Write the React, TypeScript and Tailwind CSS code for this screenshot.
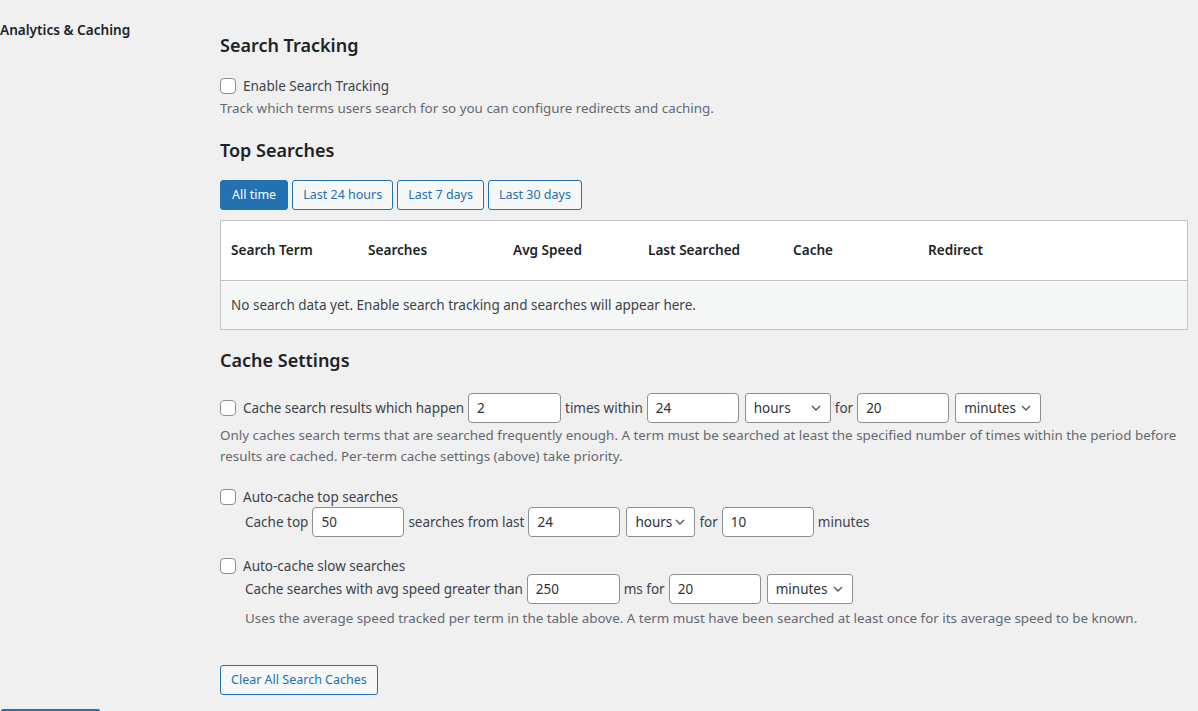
import React from "react";

const font = { fontFamily: '"Noto Sans", "Open Sans", sans-serif' };

function Checkbox() {
  return (
    <span className="inline-block w-[16px] h-[16px] shrink-0 rounded-[4px] border border-[#8c8f94] bg-white" />
  );
}

function Input({ value, w = "w-[92px]" }: { value: string; w?: string }) {
  return (
    <span
      className={`${w} h-[30px] shrink-0 flex items-center px-[8px] rounded-[4px] border border-[#8c8f94] bg-white text-[13.5px] text-[#2c3338]`}
    >
      {value}
    </span>
  );
}

function Select({ value, w }: { value: string; w: string }) {
  return (
    <span
      className={`${w} ml-[2px] h-[30px] shrink-0 flex items-center justify-between pl-[8px] pr-[8px] rounded-[3px] border border-[#8c8f94] bg-white text-[13.5px] text-[#2c3338]`}
    >
      <span>{value}</span>
      <svg width="12" height="12" viewBox="0 0 12 12" className="shrink-0">
        <polyline points="2,4 6,8 10,4" fill="none" stroke="#50575e" strokeWidth="1.4" />
      </svg>
    </span>
  );
}

export default function App() {
  const cols = [
    { label: "Search Term", w: "w-[137px]" },
    { label: "Searches", w: "w-[145px]" },
    { label: "Avg Speed", w: "w-[135px]" },
    { label: "Last Searched", w: "w-[145px]" },
    { label: "Cache", w: "w-[135px]" },
    { label: "Redirect", w: "flex-1" },
  ];
  return (
    <div style={font} className="h-[711px] overflow-hidden bg-[#f0f0f1] text-[#3c434a] relative">
      <div className="flex">
        <div className="w-[220px] shrink-0 pt-[21px] text-[13.6px] leading-[18px] font-semibold text-[#1d2327]">
          Analytics &amp; Caching
        </div>
        <div className="flex-1 pr-[10px] flex flex-col items-start">
          <h2 className="mt-[33px] text-[18px] leading-[24px] font-semibold text-[#1d2327]">Search Tracking</h2>
          <label className="mt-[19px] flex items-center gap-[7px] text-[13.5px] leading-[20px]">
            <Checkbox />
            <span>Enable Search Tracking</span>
          </label>
          <p className="mt-[2px] text-[13.4px] leading-[20px] text-[#646970]">
            Track which terms users search for so you can configure redirects and caching.
          </p>

          <h2 className="mt-[20px] text-[18px] leading-[24px] font-semibold text-[#1d2327]">Top Searches</h2>
          <div className="mt-[18px] flex gap-[4px] text-[12.5px]">
            <span className="h-[30px] px-[11px] flex items-center rounded-[3px] border border-[#2271b1] bg-[#2271b1] text-white">
              All time
            </span>
            <span className="h-[30px] px-[10px] flex items-center rounded-[3px] border border-[#2271b1] bg-[#f6f7f7] text-[#2271b1]">
              Last 24 hours
            </span>
            <span className="h-[30px] px-[10px] flex items-center rounded-[3px] border border-[#2271b1] bg-[#f6f7f7] text-[#2271b1]">
              Last 7 days
            </span>
            <span className="h-[30px] px-[10px] flex items-center rounded-[3px] border border-[#2271b1] bg-[#f6f7f7] text-[#2271b1]">
              Last 30 days
            </span>
          </div>

          <div className="mt-[10px] w-full border border-[#c3c4c7] bg-white">
            <div className="h-[60px] flex items-center pb-[1px] border-b border-[#c3c4c7] text-[13.6px] font-semibold text-[#1d2327]">
              {cols.map((c) => (
                <div key={c.label} className={`${c.w} pl-[10px]`}>
                  {c.label}
                </div>
              ))}
            </div>
            <div className="h-[48px] flex items-center pl-[10px] bg-[#f6f7f7] text-[13.5px] text-[#3c434a]">
              No search data yet. Enable search tracking and searches will appear here.
            </div>
          </div>

          <h2 className="mt-[18px] text-[18px] leading-[24px] font-semibold text-[#1d2327]">Cache Settings</h2>

          <div className="mt-[21px] flex items-center gap-[4px] text-[13.5px]">
            <Checkbox />
            <span className="ml-[3px] tracking-[-0.05px]">Cache search results which happen</span>
            <Input value="2" w="w-[93px]" />
            <span>times within</span>
            <Input value="24" />
            <Select value="hours" w="w-[86px]" />
            <span>for</span>
            <Input value="20" />
            <Select value="minutes" w="w-[86px]" />
          </div>
          <p className="mt-[2px] text-[13.4px] leading-[21px] text-[#646970]">
            Only caches search terms that are searched frequently enough. A term must be searched at least the specified number of times within the period before results are cached. Per-term cache settings (above) take priority.
          </p>

          <label className="mt-[21px] flex items-center gap-[7px] text-[13.5px] leading-[18px]">
            <Checkbox />
            <span>Auto-cache top searches</span>
          </label>
          <div className="mt-[1px] pl-[25px] flex items-center gap-[4px] text-[13.5px]">
            <span>Cache top</span>
            <Input value="50" />
            <span>searches from last</span>
            <Input value="24" />
            <Select value="hours" w="w-[69px]" />
            <span>for</span>
            <Input value="10" />
            <span>minutes</span>
          </div>

          <label className="mt-[20px] flex items-center gap-[7px] text-[13.5px] leading-[18px]">
            <Checkbox />
            <span>Auto-cache slow searches</span>
          </label>
          <div className="mt-[-1px] pl-[25px] flex items-center gap-[4px] text-[13.5px]">
            <span className="tracking-[-0.05px]">Cache searches with avg speed greater than</span>
            <Input value="250" w="w-[93px]" />
            <span>ms for</span>
            <Input value="20" />
            <Select value="minutes" w="w-[86px]" />
          </div>
          <p className="mt-[4px] pl-[25px] text-[13.4px] leading-[20px] text-[#646970]">
            Uses the average speed tracked per term in the table above. A term must have been searched at least once for its average speed to be known.
          </p>

          <span className="mt-[37px] h-[30px] px-[10px] flex items-center rounded-[3px] border border-[#2271b1] bg-[#f6f7f7] text-[12.5px] text-[#2271b1]">
            Clear All Search Caches
          </span>
        </div>
      </div>
      <div className="absolute left-[1px] top-[709px] w-[99px] h-[4px] rounded-t-[2px] bg-[#2271b1]" />
    </div>
  );
}
